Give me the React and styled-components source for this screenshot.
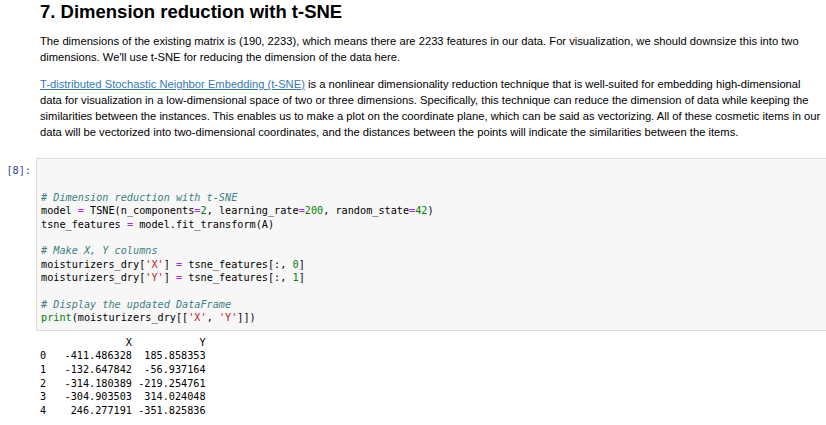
import React from "react";
import styled, { createGlobalStyle } from "styled-components";

const Global = createGlobalStyle`
  html, body { margin: 0; padding: 0; background: #fff; }
  body { font-family: "Liberation Sans", Arial, sans-serif; color: #000; overflow: hidden; }
`;

const Page = styled.div`
  width: 826px;
  height: 425px;
  overflow: hidden;
  display: flex;
  flex-direction: column;
`;

const Markdown = styled.div`
  padding: 0 2px 0 40px;
`;

const Heading = styled.h2`
  margin: 1px 0 0 0;
  font-size: 18.5px;
  line-height: 22px;
  font-weight: bold;
  color: #000;
`;

const Para = styled.p`
  margin: ${(p) => p.$top}px 0 0 0;
  font-size: 11.2px;
  line-height: 16px;
  color: #000;
`;

const Link = styled.a`
  color: #337ab7;
  text-decoration: underline;
`;

const CodeCell = styled.div`
  display: flex;
  margin-top: 18px;
`;

const Prompt = styled.div`
  width: 31px;
  flex: none;
  padding-top: 6px;
  text-align: right;
  padding-right: 5px;
  font-family: "DejaVu Sans Mono", monospace;
  font-size: 10.2px;
  line-height: 13.4px;
  color: #303f9f;
`;

const InputArea = styled.div`
  flex: 1;
  margin-right: -10px;
  background: #f7f7f7;
  border: 1px solid #dcdcdc;
  padding: 5px 4px;
`;

const Code = styled.pre`
  margin: 0;
  font-family: "DejaVu Sans Mono", monospace;
  font-size: 10.2px;
  line-height: 13.4px;
  color: #000;
`;

const Comment = styled.span`
  color: #3d7f7f;
  font-style: italic;
`;
const Op = styled.span`
  color: #aa22ff;
`;
const Num = styled.span`
  color: #008000;
`;
const Str = styled.span`
  color: #ba2121;
`;
const Builtin = styled.span`
  color: #008000;
`;

const Output = styled.pre`
  margin: 5px 0 0 40px;
  font-family: "DejaVu Sans Mono", monospace;
  font-size: 10.2px;
  line-height: 13.6px;
  color: #000;
`;

export default function App() {
  return (
    <Page>
      <Global />
      <Markdown>
        <Heading>7. Dimension reduction with t-SNE</Heading>
        <Para $top={10}>
          The dimensions of the existing matrix is (190, 2233), which means there are 2233 features in our data. For
          visualization, we should downsize this into two dimensions. We'll use t-SNE for reducing the dimension of the
          data here.
        </Para>
        <Para $top={11}>
          <Link href="#">T-distributed Stochastic Neighbor Embedding (t-SNE)</Link> is a nonlinear dimensionality
          reduction technique that is well-suited for embedding high-dimensional data for visualization in a
          low-dimensional space of two or three dimensions. Specifically, this technique can reduce the dimension of
          data while keeping the similarities between the instances. This enables us to make a plot on the coordinate
          plane, which can be said as vectorizing. All of these cosmetic items in our data will be vectorized into
          two-dimensional coordinates, and the distances between the points will indicate the similarities between the
          items.
        </Para>
      </Markdown>
      <CodeCell>
        <Prompt>[8]:</Prompt>
        <InputArea>
          <Code>
            {"\n\n"}
            <Comment># Dimension reduction with t-SNE</Comment>
            {"\nmodel "}
            <Op>=</Op>
            {" TSNE(n_components"}
            <Op>=</Op>
            <Num>2</Num>
            {", learning_rate"}
            <Op>=</Op>
            <Num>200</Num>
            {", random_state"}
            <Op>=</Op>
            <Num>42</Num>
            {")\ntsne_features "}
            <Op>=</Op>
            {" model.fit_transform(A)\n\n"}
            <Comment># Make X, Y columns</Comment>
            {"\nmoisturizers_dry["}
            <Str>'X'</Str>
            {"] "}
            <Op>=</Op>
            {" tsne_features[:, "}
            <Num>0</Num>
            {"]\nmoisturizers_dry["}
            <Str>'Y'</Str>
            {"] "}
            <Op>=</Op>
            {" tsne_features[:, "}
            <Num>1</Num>
            {"]\n\n"}
            <Comment># Display the updated DataFrame</Comment>
            {"\n"}
            <Builtin>print</Builtin>
            {"(moisturizers_dry[["}
            <Str>'X'</Str>
            {", "}
            <Str>'Y'</Str>
            {"]])"}
          </Code>
        </InputArea>
      </CodeCell>
      <Output>
        {"              X           Y\n"}
        {"0   -411.486328  185.858353\n"}
        {"1   -132.647842  -56.937164\n"}
        {"2   -314.180389 -219.254761\n"}
        {"3   -304.903503  314.024048\n"}
        {"4    246.277191 -351.825836"}
      </Output>
    </Page>
  );
}
